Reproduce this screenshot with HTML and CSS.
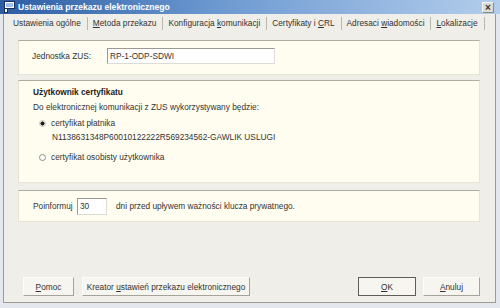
FILE: index.html
```html
<!DOCTYPE html>
<html lang="pl">
<head>
  <meta charset="UTF-8" />
  <meta name="viewport" content="width=device-width, initial-scale=1.0"/>
  <title>Ustawienia przekazu elektronicznego</title>
  <link rel="stylesheet" href="styles.css">
</head>
<body>
  <div class="titlebar">
    <svg class="app-icon" width="12" height="12" viewBox="0 0 12 12">
      <rect x="1.5" y="0.5" width="10" height="7" fill="#fff" stroke="#1b2f5c"/>
      <rect x="3" y="2" width="7" height="4" fill="#9fc0e8"/>
      <rect x="1.5" y="7.5" width="3" height="4" fill="#fff" stroke="#1b2f5c"/>
    </svg>
    <span class="title">Ustawienia przekazu elektronicznego</span>
    <span class="close">&#215;</span>
  </div>

  <div class="dialog">
    <div class="tabs">
      <span class="tab">Ustawienia ogólne</span>
      <span class="tab"><u>M</u>etoda przekazu</span>
      <span class="tab">Konfiguracja <u>k</u>omunikacji</span>
      <span class="tab">Certyfikaty i <u>C</u>RL</span>
      <span class="tab">Adresaci <u>w</u>iadomości</span>
      <span class="tab"><u>L</u>okalizacje</span>
    </div>

    <div class="panel panel-zus">
      <label class="lbl-zus">Jednostka ZUS:</label>
      <input class="field field-zus" type="text" value="RP-1-ODP-SDWI" readonly />
    </div>

    <div class="panel panel-cert">
      <div class="cert-title">Użytkownik certyfikatu</div>
      <div class="cert-desc">Do elektronicznej komunikacji z ZUS wykorzystywany będzie:</div>
      <div class="radio-row">
        <span class="radio checked"></span>
        <span>certyfikat płatnika</span>
      </div>
      <div class="cert-name">N1138631348P60010122222R569234562-GAWLIK USLUGI</div>
      <div class="radio-row radio-second">
        <span class="radio"></span>
        <span>certyfikat osobisty użytkownika</span>
      </div>
    </div>

    <div class="panel panel-info">
      <label>Poinformuj</label>
      <input class="field field-days" type="text" value="30" readonly />
      <span>dni przed upływem ważności klucza prywatnego.</span>
    </div>

    <div class="buttons">
      <button class="btn btn-help"><u>P</u>omoc</button>
      <button class="btn btn-wizard">Kreator <u>u</u>stawień przekazu elektronicznego</button>
      <button class="btn btn-ok"><u>O</u>K</button>
      <button class="btn btn-cancel"><u>A</u>nuluj</button>
    </div>
  </div>
</body>
</html>
```

FILE: styles.css
```css
body {
  margin: 0;
  font-family: "Liberation Sans", Arial, sans-serif;
  font-size: 8.3px;
  color: #333;
  background-color: #e4e8ee;
}

.titlebar {
  display: flex;
  align-items: center;
  height: 14px;
  padding-left: 3px;
  background: linear-gradient(to right, #2c5da3, #6f9bd2 45%, #b3cdec);
}

.app-icon {
  display: block;
}

.title {
  margin-left: 3px;
  color: white;
  font-weight: bold;
  font-size: 8.6px;
}

.close {
  margin-left: auto;
  margin-right: 6px;
  width: 10px;
  height: 9px;
  line-height: 9px;
  text-align: center;
  font-size: 10px;
  font-weight: bold;
  color: #333;
  background-color: #dcdcd6;
  border: 1px solid #f4f4f4;
  border-right-color: #8a8a8a;
  border-bottom-color: #8a8a8a;
}

.dialog {
  display: flex;
  flex-direction: column;
  width: 491px;
  height: 288px;
  margin-left: 3px;
  background-color: #efeee9;
  border: 1px solid #9c9c94;
  border-top: none;
}

.tabs {
  display: flex;
  align-items: center;
  height: 18px;
  padding-left: 9px;
  white-space: nowrap;
}

.tab {
  flex-shrink: 0;
  padding-right: 6px;
  margin-right: 5px;
  line-height: 13px;
  border-right: 1px solid #b9b8ae;
}

.panel {
  margin: 0 15px 0 14px;
  background-color: #fffdf0;
  border: 1px solid #e6e4d6;
  border-top-color: #aeada0;
}

.panel-zus {
  display: flex;
  align-items: center;
  margin-top: 8px;
  padding: 7px 13px 10px 13px;
}

.lbl-zus {
  width: 75px;
}

.field {
  box-sizing: border-box;
  padding: 0 2px;
  font-family: "Liberation Sans", Arial, sans-serif;
  font-size: 8.3px;
  color: #333;
  background-color: white;
  border: 1px solid #dcdcd4;
  border-top-color: #9a9a92;
  border-left-color: #9a9a92;
  outline: none;
}

.field-zus {
  width: 168px;
  height: 16px;
}

.panel-cert {
  margin-top: 5px;
  padding: 5px 14px 19px 14px;
  line-height: 12px;
}

.cert-title {
  font-weight: bold;
  color: #222;
}

.cert-desc {
  margin-top: 3px;
}

.radio-row {
  display: flex;
  align-items: center;
  gap: 5px;
  margin-top: 4px;
  padding-left: 6px;
}

.radio-second {
  margin-top: 8px;
}

.radio {
  box-sizing: border-box;
  width: 7px;
  height: 7px;
  border: 1px solid #8d8d86;
  border-radius: 50%;
  background-color: white;
}

.radio.checked {
  background: radial-gradient(circle, #1a1a1a 0 1.8px, #fbfbf6 2.3px);
  border-color: #c8c8c0;
}

.cert-name {
  margin-top: 2px;
  padding-left: 19px;
}

.panel-info {
  display: flex;
  align-items: center;
  height: 30px;
  margin-top: 7px;
  padding: 0 14px;
}

.panel-info label {
  width: 44px;
}

.field-days {
  width: 30px;
  height: 17px;
  margin-right: 9px;
}

.buttons {
  display: flex;
  margin-top: auto;
  padding: 0 15px 6px 19px;
}

.btn {
  box-sizing: border-box;
  height: 19px;
  padding: 0;
  font-family: "Liberation Sans", Arial, sans-serif;
  font-size: 8.3px;
  color: #333;
  background-color: #f6f5f0;
  border: 1px solid #fdfdfb;
  border-right-color: #a4a39a;
  border-bottom-color: #a4a39a;
}

.btn-help {
  width: 51px;
}

.btn-wizard {
  width: 168px;
  margin-left: 8px;
}

.btn-ok {
  width: 58px;
  margin-left: auto;
  border: 1px solid #5e5e58;
}

.btn-cancel {
  width: 57px;
  margin-left: 7px;
}
```
